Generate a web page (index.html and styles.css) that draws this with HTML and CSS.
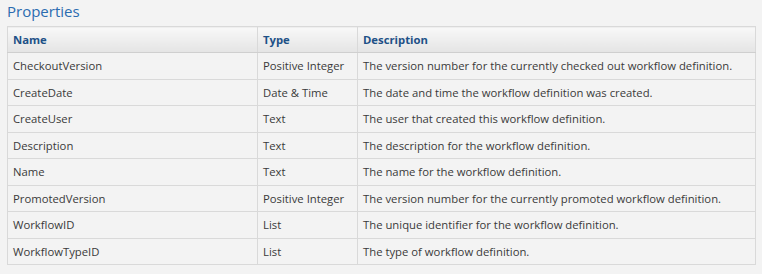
FILE: index.html
```html
<!DOCTYPE html>
<html lang="en">
<head>
  <meta charset="UTF-8" />
  <title>Properties</title>
  <link rel="stylesheet" href="styles.css">
</head>
<body>

<h2 class="section-title">Properties</h2>

<table class="props-table">
  <thead>
    <tr>
      <th class="col-name">Name</th>
      <th class="col-type">Type</th>
      <th>Description</th>
    </tr>
  </thead>
  <tbody>
    <tr>
      <td>CheckoutVersion</td>
      <td>Positive Integer</td>
      <td>The version number for the currently checked out workflow definition.</td>
    </tr>
    <tr>
      <td>CreateDate</td>
      <td>Date &amp; Time</td>
      <td>The date and time the workflow definition was created.</td>
    </tr>
    <tr>
      <td>CreateUser</td>
      <td>Text</td>
      <td>The user that created this workflow definition.</td>
    </tr>
    <tr>
      <td>Description</td>
      <td>Text</td>
      <td>The description for the workflow definition.</td>
    </tr>
    <tr>
      <td>Name</td>
      <td>Text</td>
      <td>The name for the workflow definition.</td>
    </tr>
    <tr>
      <td>PromotedVersion</td>
      <td>Positive Integer</td>
      <td>The version number for the currently promoted workflow definition.</td>
    </tr>
    <tr>
      <td>WorkflowID</td>
      <td>List</td>
      <td>The unique identifier for the workflow definition.</td>
    </tr>
    <tr>
      <td>WorkflowTypeID</td>
      <td>List</td>
      <td>The type of workflow definition.</td>
    </tr>
  </tbody>
</table>

</body>
</html>
```

FILE: styles.css
```css
body {
  background-color: #f3f3f3;
  font-family: "Open Sans", "Noto Sans", sans-serif;
  margin: 0;
  padding: 0 6px 0 7px;
  color: #3a3a3a;
}

.section-title {
  margin: 0;
  padding-top: 1px;
  height: 25px;
  font-size: 15px;
  font-weight: normal;
  color: #2b6cb0;
}

.props-table {
  width: 749px;
  border-collapse: collapse;
  border: 1px solid #d3d3d3;
  font-size: 11.3px;
}

.props-table th,
.props-table td {
  border: 1px solid #d9d9d9;
  padding: 0 5px;
  text-align: left;
  white-space: nowrap;
}

.props-table th {
  height: 25px;
  background: linear-gradient(to bottom, #f8f8f8, #e4e4e4);
  border-bottom: 1px solid #cfcfcf;
  color: #1e5187;
  font-weight: bold;
}

.props-table td {
  height: 25.5px;
}

.col-name {
  width: 239px;
}

.col-type {
  width: 89px;
}
```
